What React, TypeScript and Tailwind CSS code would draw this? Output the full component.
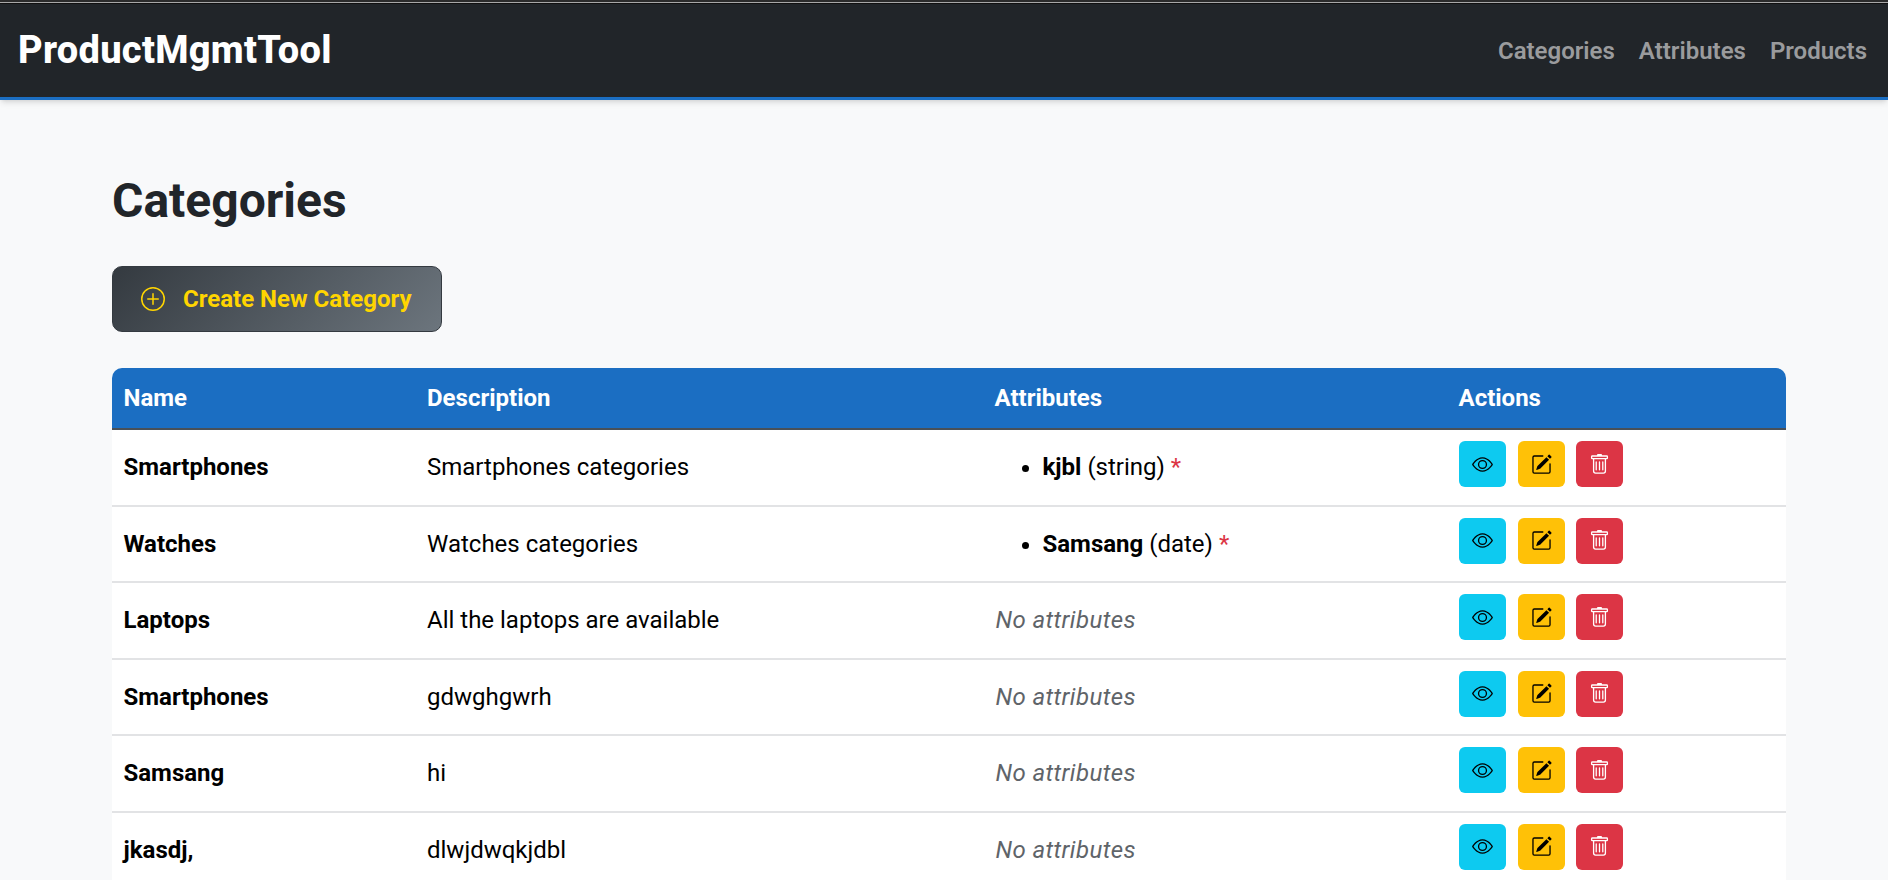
import { BsEye, BsPencilSquare, BsPlusCircle, BsTrash } from "react-icons/bs";

const rows = [
  { name: "Smartphones", description: "Smartphones categories", attr: { name: "kjbl", type: "string" } },
  { name: "Watches", description: "Watches categories", attr: { name: "Samsang", type: "date" } },
  { name: "Laptops", description: "All the laptops are available" },
  { name: "Smartphones", description: "gdwghgwrh" },
  { name: "Samsang", description: "hi" },
  { name: "jkasdj,", description: "dlwjdwqkjdbl" },
];

export default function App() {
  return (
    <div className="h-screen overflow-hidden bg-[#f8f9fa] font-['Roboto',sans-serif] text-[#212529]">
      <div className="h-[2px] bg-[#2b2b2b]" />
      <div className="h-px bg-[#a8a8a8]" />
      <div className="h-px bg-[#111111]" />
      <nav className="flex h-[96px] items-center justify-between border-b-[3px] border-[#1b6ec2] bg-[#212529] pr-[21px] pl-[18px] shadow-md">
        <a className="text-[38px] font-extrabold tracking-[0.3px] text-white">ProductMgmtTool</a>
        <div className="flex gap-6 text-[24px] font-semibold text-[#9a9b9d]">
          <a>Categories</a>
          <a>Attributes</a>
          <a>Products</a>
        </div>
      </nav>

      <main className="pt-[72px] pr-[102px] pl-[112px]">
        <h1 className="text-[48px] leading-[58px] font-bold">Categories</h1>
        <button className="mt-[36px] flex h-[66px] w-[330px] items-center gap-[18px] rounded-[10px] border border-[#343a40] bg-[linear-gradient(135deg,#343a40,#6c757d)] pl-[28px] text-[24px] font-bold text-[#ffd500]">
          <BsPlusCircle size={24} />
          Create New Category
        </button>

        <table className="mt-[36px] w-full table-fixed border-collapse text-[24px] text-black">
          <thead>
            <tr className="h-[61px] border-b-2 border-[#495057] bg-[#1b6ec2] text-left text-white">
              <th className="w-[303px] rounded-tl-[10px] pl-[11.5px] font-bold">Name</th>
              <th className="w-[567.5px] pl-3 font-bold">Description</th>
              <th className="w-[464px] pl-3 font-bold">Attributes</th>
              <th className="rounded-tr-[10px] pl-3 font-bold">Actions</th>
            </tr>
          </thead>
          <tbody>
            {rows.map((row, i) => (
              <tr key={i} className="h-[76.5px] border-b-2 border-[#e2e3e5] bg-white">
                <td className="pl-[11.5px] font-bold">{row.name}</td>
                <td className="pl-3">{row.description}</td>
                <td className="pl-3">
                  {row.attr ? (
                    <ul className="list-disc pl-[48px]">
                      <li>
                        <b>{row.attr.name}</b> ({row.attr.type}) <span className="text-[#dc3545]">*</span>
                      </li>
                    </ul>
                  ) : (
                    <em className="ml-px tracking-[0.4px] text-[#5f6469]">No attributes</em>
                  )}
                </td>
                <td className="pb-[6px] pl-3">
                  <div className="flex gap-3">
                    <button className="flex h-[46px] w-[47px] items-center justify-center rounded-[6px] bg-[#0dcaf0] text-black">
                      <BsEye size={21} />
                    </button>
                    <button className="flex h-[46px] w-[47px] items-center justify-center rounded-[6px] bg-[#ffc107] text-black">
                      <BsPencilSquare size={21} />
                    </button>
                    <button className="-ml-px flex h-[46px] w-[47px] items-center justify-center rounded-[6px] bg-[#dc3545] text-white">
                      <BsTrash size={21} />
                    </button>
                  </div>
                </td>
              </tr>
            ))}
          </tbody>
        </table>
      </main>
    </div>
  );
}
